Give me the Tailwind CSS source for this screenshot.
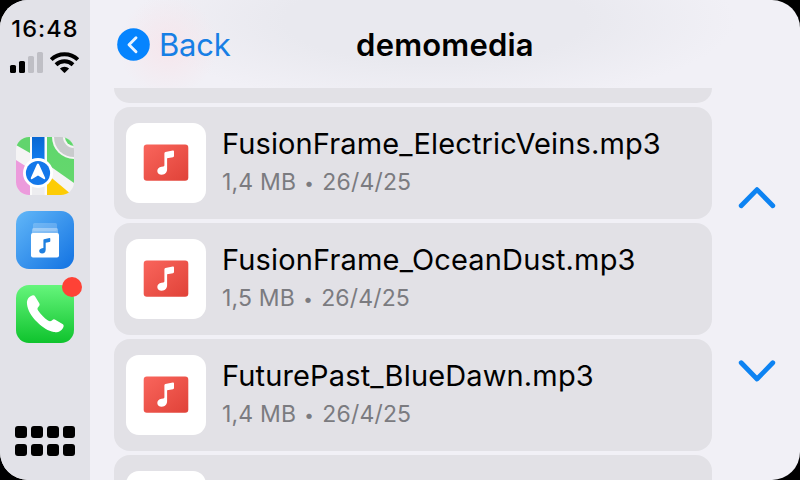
<!DOCTYPE html>
<html lang="en">
<head>
<meta charset="utf-8">
<title>demomedia</title>
<script src="https://cdn.jsdelivr.net/npm/@tailwindcss/browser@4"></script>
</head>
<body class="bg-black font-['Inter',sans-serif]">
<svg class="absolute size-0" aria-hidden="true">
  <defs>
    <linearGradient id="red" x1="0" y1="0" x2="1" y2="1"><stop offset="0" stop-color="#f9655c"/><stop offset="1" stop-color="#e04238"/></linearGradient>
  </defs>
  <symbol id="song" viewBox="0 0 80 80">
    <rect x="17.700" y="21.600" width="44.600" height="36.200" rx="3.200" fill="url(#red)"/>
    <path d="M38.400 30.200q0-1 1-1.200l7.400-1.400q1.200-.2 1.200 1v4.400q0 1-1 1.200l-5.900 1.100v10.800c0 3.500-1.900 5.600-5.300 5.600-2.700 0-4.500-1.500-4.500-3.700 0-2.300 1.600-3.700 4.200-4.200l1.900-.4q1-.2 1-1.200z" fill="#fff"/>
  </symbol>
</svg>
<div class="flex h-[480px] w-[800px] overflow-hidden rounded-[28px] bg-[#f1f0f6]">
  <aside class="flex w-[90px] shrink-0 flex-col items-center bg-[#e2e2e8]">
    <div class="mt-[15px] h-7 text-[23.5px] leading-7 font-medium tracking-[1.1px] whitespace-nowrap">16:48</div>
    <svg class="mt-[7px] h-[26px] w-[90px]" viewBox="0 50 90 26">
      <rect x="10" y="65" width="6" height="8" rx="1.600"/>
      <rect x="19" y="61" width="6" height="12" rx="1.600"/>
      <rect x="28" y="56" width="6" height="17" rx="1.600" fill="#bfbfc5"/>
      <rect x="37" y="52" width="6" height="21" rx="1.600" fill="#bfbfc5"/>
      <g fill="none" stroke="#000" stroke-width="4">
        <path d="M51.200 59.600a19.100 19.100 0 0 1 26.600 0"/>
        <path d="M56 64.700a12.400 12.400 0 0 1 17 0"/>
      </g>
      <path d="M59.900 68.600a6.800 6.800 0 0 1 9.200 0l-4 4q-.6.600-1.200 0z"/>
    </svg>
    <svg class="mt-[61px] size-[58px] rounded-[13px]" viewBox="0 0 58 58">
      <defs>
        <linearGradient id="mg" x1="0" y1="0" x2="0" y2="1"><stop offset="0" stop-color="#5fd76c"/><stop offset="1" stop-color="#65d76d"/></linearGradient>
        <linearGradient id="mb" x1="0" y1="0" x2="0" y2="1"><stop offset="0" stop-color="#0867d2"/><stop offset="1" stop-color="#1482f7"/></linearGradient>
      </defs>
      <rect width="58" height="58" fill="#f5f4f5"/>
      <path d="M0 0h14v16L0 8z" fill="#62d46d"/>
      <path d="M0 23l14 9v26H0z" fill="#ec9bdc"/>
      <path d="M31 0h27v46L31 27z" fill="url(#mg)"/>
      <path d="M31 37l25 21H31z" fill="#fdcc06"/>
      <path d="M36 0a22 22 0 0 0 22 22V0z" fill="#f5f4f5"/>
      <path d="M38 0a20 20 0 0 0 20 20V0z" fill="#c9cbcd"/>
      <path d="M47 0a11 11 0 0 0 11 11V0z" fill="#f5f4f5"/>
      <path d="M49 0a9 9 0 0 0 9 9V0z" fill="#5fd76c"/>
      <path d="M14 0h2v58h-2zM28.500 0h2.500v58h-2.500z" fill="#fbfbfb"/>
      <path d="M16 0h12.500v30H16z" fill="url(#mb)"/>
      <path d="M16 30h12.500v28H16z" fill="#ededf0"/>
      <circle cx="22" cy="36" r="15" fill="#fff"/>
      <circle cx="22" cy="36" r="12.100" fill="#1478ea"/>
      <path d="M20.800 27.500q1.200-2 2.300 0l6 13.300q.6 1.900-1.300 1.200L22 38.500 16.200 42q-1.900.7-1.300-1.200z" fill="#fff"/>
    </svg>
    <svg class="mt-4 size-[58px] rounded-[13px]" viewBox="0 0 58 58">
      <defs><linearGradient id="ev" x1="0" y1="0" x2="1" y2="1"><stop offset="0" stop-color="#62b7f8"/><stop offset="1" stop-color="#1272e2"/></linearGradient></defs>
      <rect width="58" height="58" fill="url(#ev)"/>
      <rect x="17" y="12" width="24" height="8" rx="1.500" fill="#fff" opacity=".2"/>
      <rect x="16" y="17" width="26" height="7" rx="1.500" fill="#fff" opacity=".35"/>
      <rect x="15" y="22" width="28" height="24.500" rx="2" fill="#fff"/>
      <path d="M28 28.200l5.500-1.300q.8-.1.800.8v2.300q0 .8-.8 1l-3.800.8v6.800c0 2.500-1.300 4-3.600 4-1.800 0-2.900-1-2.900-2.500 0-1.600 1.200-2.500 2.800-2.900l1.400-.3v-7.700q0-.8.600-1z" fill="#1f80e0"/>
    </svg>
    <div class="relative mt-4">
      <svg class="size-[58px] rounded-[13px]" viewBox="0 0 58 58">
        <defs><linearGradient id="ph" x1="0" y1="0" x2="0" y2="1"><stop offset="0" stop-color="#66f57c"/><stop offset="1" stop-color="#0fc32d"/></linearGradient></defs>
        <rect width="58" height="58" fill="url(#ph)"/>
        <path d="M16.300 10.500c1.300-.4 2.200 0 3 1.200l3.800 6.300c.9 1.500.6 2.500-.6 3.700-1.400 1.400-1.300 2.500-.2 4.100 2.600 3.900 5.800 7.100 9.700 9.800 1.600 1.100 2.900 1 4.200-.4 1-1 2.100-1.100 3.500-.3l6.800 4c1.100.7 1.400 1.600 1 2.800-1.200 3.900-5.100 6-9.700 5.400-5.300-.8-11.400-4.700-16.700-10C15.500 31.500 11.500 25 11 19c-.4-4.400 1.600-7.400 5.300-8.500z" fill="#fff"/>
      </svg>
      <span class="absolute -top-2 -right-2 size-5 rounded-full bg-[#fe4236]"></span>
    </div>
    <div class="mt-auto mb-6 grid grid-cols-4 gap-x-1 gap-y-1.5">
      <i class="size-3 rounded-[3px] bg-black"></i><i class="size-3 rounded-[3px] bg-black"></i><i class="size-3 rounded-[3px] bg-black"></i><i class="size-3 rounded-[3px] bg-black"></i>
      <i class="size-3 rounded-[3px] bg-black"></i><i class="size-3 rounded-[3px] bg-black"></i><i class="size-3 rounded-[3px] bg-black"></i><i class="size-3 rounded-[3px] bg-black"></i>
    </div>
  </aside>
  <div class="flex min-w-0 flex-1 flex-col">
    <header class="grid h-[88px] shrink-0 grid-cols-[1fr_auto_1fr] items-center bg-[radial-gradient(ellipse_50px_50px_at_78px_46px,#f6e6ec,transparent),radial-gradient(ellipse_300px_85px_at_345px_20px,#e9e9ef_50%,transparent)] px-[27px]">
      <div class="flex items-center gap-[9px] pt-px text-[31px] tracking-[-0.2px] text-[#177fe5]">
        <svg class="size-[33px]" viewBox="0 0 33 33"><circle cx="16.500" cy="16.500" r="16.300" fill="#0584fe"/><path d="M19 9.700l-7 7 7 7" fill="none" stroke="#e8f3ff" stroke-width="2.900" stroke-linecap="round" stroke-linejoin="round"/></svg>
        <span class="pt-px">Back</span>
      </div>
      <h1 class="pt-0.5 text-[31px] font-semibold tracking-[0.2px]">demomedia</h1>
      <span></span>
    </header>
    <div class="flex min-h-0 flex-1">
      <main class="ml-6 flex w-[598px] flex-col gap-1 overflow-hidden">
        <div class="h-[15px] shrink-0 rounded-b-2xl bg-[#e2e1e6]"></div>
        <article class="flex h-28 shrink-0 items-center gap-4 rounded-2xl bg-[#e2e1e6] px-3">
          <svg class="size-20 rounded-[13px] bg-white"><use href="#song"/></svg>
          <div class="pb-0.5"><h2 class="text-[29px] leading-9 tracking-[0.12px] whitespace-nowrap">FusionFrame_ElectricVeins.mp3</h2><p class="mt-1 text-[23px] leading-8 tracking-[0.16px] text-[#7b7b80]">1,4 MB <span class="inline-block w-[13px] text-center align-[1px] text-[17px] leading-none">•</span> 26/4/25</p></div>
        </article>
        <article class="flex h-28 shrink-0 items-center gap-4 rounded-2xl bg-[#e2e1e6] px-3">
          <svg class="size-20 rounded-[13px] bg-white"><use href="#song"/></svg>
          <div class="pb-0.5"><h2 class="text-[29px] leading-9 tracking-[0.16px] whitespace-nowrap">FusionFrame_OceanDust.mp3</h2><p class="mt-1 text-[23px] leading-8 tracking-[0.16px] text-[#7b7b80]">1,5 MB <span class="inline-block w-[13px] text-center align-[1px] text-[17px] leading-none">•</span> 26/4/25</p></div>
        </article>
        <article class="flex h-28 shrink-0 items-center gap-4 rounded-2xl bg-[#e2e1e6] px-3">
          <svg class="size-20 rounded-[13px] bg-white"><use href="#song"/></svg>
          <div class="pb-0.5"><h2 class="text-[29px] leading-9 tracking-[0.14px] whitespace-nowrap">FuturePast_BlueDawn.mp3</h2><p class="mt-1 text-[23px] leading-8 tracking-[0.16px] text-[#7b7b80]">1,4 MB <span class="inline-block w-[13px] text-center align-[1px] text-[17px] leading-none">•</span> 26/4/25</p></div>
        </article>
        <article class="flex h-28 shrink-0 items-center rounded-2xl bg-[#e2e1e6] px-3"><div class="size-20 rounded-[13px] bg-white"></div></article>
      </main>
      <nav class="flex flex-1 flex-col items-center pt-[96px] pl-px">
        <svg class="h-7 w-10" viewBox="0 0 40 28"><path d="M4.200 21.800L20 5.600l15.800 16.200" fill="none" stroke="#0d83f2" stroke-width="4.800" stroke-linecap="round" stroke-linejoin="round"/></svg>
        <svg class="mt-[145px] h-7 w-10" viewBox="0 0 40 28"><path d="M4.200 5.800L20 22l15.800-16.200" fill="none" stroke="#0d83f2" stroke-width="4.800" stroke-linecap="round" stroke-linejoin="round"/></svg>
      </nav>
    </div>
  </div>
</div>
</body>
</html>
